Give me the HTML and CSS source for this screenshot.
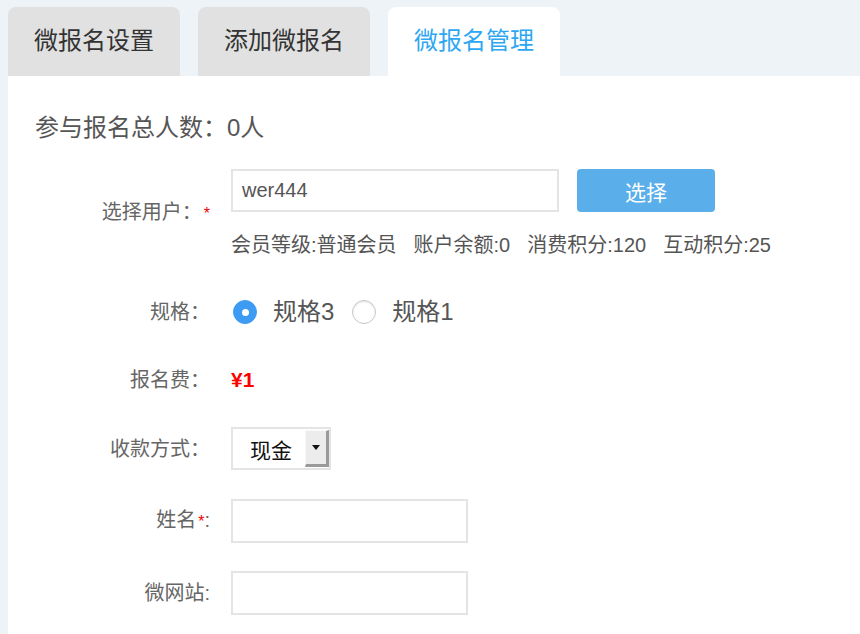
FILE: index.html
```html
<!DOCTYPE html>
<html lang="zh-CN">
<head>
<meta charset="utf-8">
<title>微报名管理</title>
<link rel="stylesheet" href="styles.css">
</head>
<body>
<div class="page">
  <div class="tabs">
    <div class="tab">微报名设置</div>
    <div class="tab">添加微报名</div>
    <div class="tab active">微报名管理</div>
  </div>
  <div class="panel">
    <div class="count">参与报名总人数：0人</div>

    <div class="row row-user">
      <div class="label label-low">选择用户：<span class="req">*</span></div>
      <div class="field">
        <div class="user-line">
          <div class="input input-wide">wer444</div>
          <div class="btn">选择</div>
        </div>
      </div>
    </div>
    <div class="info">
      <span class="info-item">会员等级:普通会员</span>
      <span class="info-item">账户余额:0</span>
      <span class="info-item">消费积分:120</span>
      <span class="info-item">互动积分:25</span>
    </div>

    <div class="row row-spec">
      <div class="label">规格：</div>
      <div class="field radios">
        <span class="radio checked"></span><span class="radio-text">规格3</span>
        <span class="radio"></span><span class="radio-text">规格1</span>
      </div>
    </div>

    <div class="row row-fee">
      <div class="label">报名费：</div>
      <div class="field price">¥1</div>
    </div>

    <div class="row row-pay">
      <div class="label">收款方式：</div>
      <div class="field">
        <div class="select">
          <span class="select-text">现金</span>
          <span class="select-btn"><span class="caret"></span></span>
        </div>
      </div>
    </div>

    <div class="row row-name">
      <div class="label">姓名<span class="req">*</span>:</div>
      <div class="field"><div class="input input-short"></div></div>
    </div>

    <div class="row row-site">
      <div class="label">微网站:</div>
      <div class="field"><div class="input input-short"></div></div>
    </div>
  </div>
</div>
</body>
</html>
```

FILE: styles.css
```css
* { box-sizing: border-box; }
html, body { margin: 0; padding: 0; }
body {
  background: #edf3f7;
  font-family: "Liberation Sans", "Noto Sans CJK SC", sans-serif;
  color: #555;
  width: 860px;
  height: 634px;
  overflow: hidden;
}
.page { padding-left: 8px; }
.tabs {
  display: flex;
  gap: 18px;
  padding-top: 7px;
  height: 76px;
}
.tab {
  width: 172px;
  height: 69px;
  background: #e1e1e1;
  border-radius: 8px 8px 0 0;
  display: flex;
  align-items: center;
  justify-content: center;
  font-size: 24px;
  line-height: 30px;
  color: #333;
  padding-bottom: 2px;
}
.tab.active { background: #fff; color: #2ea7f2; }
.panel {
  background: #fff;
  height: 558px;
  padding-top: 37px;
}
.count {
  font-size: 24px;
  line-height: 30px;
  padding-left: 27px;
  color: #555;
}
.row {
  display: flex;
  align-items: center;
}
.label {
  width: 202px;
  text-align: right;
  font-size: 20px;
  line-height: 28px;
  color: #666;
  flex: none;
}
.field { margin-left: 21px; }
.req { color: #e00; font-size: 16px; margin-left: 2px; }
.row-user { margin-top: 26px; align-items: flex-start; height: 43px; }
.label-low { padding-top: 31px; line-height: 24px; }
.user-line { display: flex; gap: 18px; align-items: center; }
.input {
  height: 43px;
  border: 2px solid #e4e4e4;
  background: #fff;
  font-size: 20px;
  line-height: 39px;
  padding-left: 9px;
  color: #555;
}
.input-wide { width: 328px; }
.input-short { width: 237px; height: 44px; }
.btn {
  width: 138px;
  height: 43px;
  border-radius: 4px;
  background: #5aaeea;
  color: #fff;
  font-size: 21px;
  display: flex;
  align-items: center;
  justify-content: center;
}
.info {
  margin-left: 223px;
  margin-top: 21px;
  font-size: 20px;
  line-height: 24px;
  height: 24px;
  color: #555;
  display: flex;
  gap: 17px;
}
.row-spec { margin-top: 40px; height: 30px; }
.radios { display: flex; align-items: center; margin-left: 23px; height: 30px; }
.radio {
  width: 24px;
  height: 24px;
  border-radius: 50%;
  border: 1px solid #c8c8c8;
  box-shadow: inset 0 1px 2px rgba(0,0,0,0.12);
  background: #fff;
  display: inline-block;
  flex: none;
}
.radio.checked {
  background: #3d9bf4;
  border-color: #3d9bf4;
  box-shadow: none;
  position: relative;
}
.radio.checked::after {
  content: "";
  position: absolute;
  left: 7.5px;
  top: 7.5px;
  width: 7px;
  height: 7px;
  border-radius: 50%;
  background: #fff;
}
.radio-text {
  font-size: 24px;
  line-height: 30px;
  color: #555;
  margin-left: 16px;
  margin-right: 18px;
}
.row-fee { margin-top: 38px; height: 30px; }
.price { color: #f00; font-size: 21px; line-height: 30px; font-weight: bold; }
.row-pay { margin-top: 32px; height: 43px; }
.select {
  width: 100px;
  height: 43px;
  border: 2px solid #e4e4e4;
  display: flex;
  align-items: center;
  justify-content: space-between;
  padding: 2px 0 2px 0;
}
.select-text { font-size: 21px; color: #111; padding-left: 17px; }
.select-btn {
  width: 24px;
  height: 37px;
  background: #ececec;
  border-top: 1px solid #f8f8f8;
  border-left: 1px solid #f8f8f8;
  border-right: 3px solid #9a9a9a;
  border-bottom: 3px solid #9a9a9a;
  display: flex;
  align-items: center;
  justify-content: center;
}
.caret {
  width: 0;
  height: 0;
  border-left: 4px solid transparent;
  border-right: 4px solid transparent;
  border-top: 5px solid #111;
}
.row-name { margin-top: 29px; height: 44px; }
.row-site { margin-top: 28px; height: 44px; }
```
